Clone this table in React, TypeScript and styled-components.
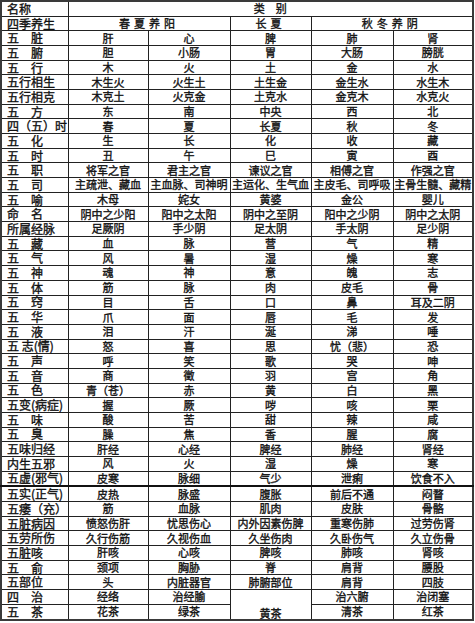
import styled, { createGlobalStyle } from "styled-components";

const GlobalStyle = createGlobalStyle`
  html, body {
    margin: 0;
    padding: 0;
    background: #fff;
  }
  body {
    font-family: "Noto Sans CJK SC", "Liberation Sans", sans-serif;
    color: #111;
  }
`;

const Sheet = styled.div`
  width: 475px;
  height: 623px;
  overflow: hidden;
`;

const Table = styled.table`
  width: 474px;
  height: 621px;
  border-collapse: collapse;
  table-layout: fixed;
  border: 2px solid #3a3a3a;
`;

const Line = styled.tr<{ $heavy?: boolean }>`
  td {
    border-top: ${(p) => (p.$heavy ? "2px solid #111" : "1px solid #222")};
  }
`;

const Cell = styled.td<{ $left?: boolean; $spaced?: boolean; $bottom?: boolean }>`
  border: 1px solid #222;
  padding: ${(p) => (p.$left ? "0 0 0 5px" : "0")};
  font-size: ${(p) => (p.$left ? "12px" : "11px")};
  line-height: 1;
  -webkit-text-stroke: 0.35px #111;
  text-align: ${(p) => (p.$left ? "left" : "center")};
  vertical-align: ${(p) => (p.$bottom ? "bottom" : "middle")};
  letter-spacing: ${(p) => (p.$spaced ? "4px" : "0")};
  white-space: nowrap;
`;

type Row = [string, string, string, string, string, string];

const rows: Row[] = [
  ["五　脏", "肝", "心", "脾", "肺", "肾"],
  ["五　腑", "胆", "小肠", "胃", "大肠", "膀胱"],
  ["五　行", "木", "火", "土", "金", "水"],
  ["五行相生", "木生火", "火生土", "土生金", "金生水", "水生木"],
  ["五行相克", "木克土", "火克金", "土克水", "金克木", "水克火"],
  ["五　方", "东", "南", "中央", "西", "北"],
  ["四（五）时", "春", "夏", "长夏", "秋", "冬"],
  ["五　化", "生", "长", "化", "收", "藏"],
  ["五　时", "丑", "午", "巳", "寅", "酉"],
  ["五　职", "将军之官", "君主之官", "谏议之官", "相傅之官", "作强之官"],
  ["五　司", "主疏泄、藏血", "主血脉、司神明", "主运化、生气血", "主皮毛、司呼吸", "主骨生髓、藏精"],
  ["五　喻", "木母", "姹女", "黄婆", "金公", "婴儿"],
  ["命　名", "阴中之少阳", "阳中之太阳", "阴中之至阴", "阳中之少阴", "阴中之太阴"],
  ["所属经脉", "足厥阴", "手少阴", "足太阴", "手太阴", "足少阴"],
  ["五　藏", "血", "脉", "营", "气", "精"],
  ["五　气", "风", "暑", "湿", "燥", "寒"],
  ["五　神", "魂", "神", "意", "魄", "志"],
  ["五　体", "筋", "脉", "肉", "皮毛", "骨"],
  ["五　窍", "目", "舌", "口", "鼻", "耳及二阴"],
  ["五　华", "爪", "面", "唇", "毛", "发"],
  ["五　液", "泪", "汗", "涎", "涕", "唾"],
  ["五 志(情)", "怒", "喜", "思", "忧（悲）", "恐"],
  ["五　声", "呼", "笑", "歌", "哭", "呻"],
  ["五　音", "商", "徵", "羽", "宫", "角"],
  ["五　色", "青（苍）", "赤", "黄", "白", "黑"],
  ["五变(病症)", "握", "厥", "哕", "咳", "栗"],
  ["五　味", "酸", "苦", "甜", "辣", "咸"],
  ["五　臭", "臊", "焦", "香", "腥", "腐"],
  ["五味归经", "肝经", "心经", "脾经", "肺经", "肾经"],
  ["内生五邪", "风", "火", "湿", "燥", "寒"],
  ["五虚(邪气)", "皮寒", "脉细", "气少", "泄痢", "饮食不入"],
  ["五实(正气)", "皮热", "脉盛", "腹胀", "前后不通", "闷瞀"],
  ["五痿（充）", "筋", "血脉", "肌肉", "皮肤", "骨骼"],
  ["五脏病因", "愤怒伤肝", "忧思伤心", "内外因素伤脾", "重寒伤肺", "过劳伤肾"],
  ["五劳所伤", "久行伤筋", "久视伤血", "久坐伤肉", "久卧伤气", "久立伤骨"],
  ["五脏咳", "肝咳", "心咳", "脾咳", "肺咳", "肾咳"],
  ["五　俞", "颈项", "胸胁", "脊", "肩背", "腰股"],
  ["五部位", "头", "内脏器官", "肺腑部位", "肩背", "四肢"],
];

const widths = [67, 80, 82, 81, 82];

export default function App() {
  return (
    <Sheet>
      <GlobalStyle />
      <Table>
        <colgroup>
          {widths.map((w, i) => (
            <col key={i} style={{ width: w }} />
          ))}
          <col />
        </colgroup>
        <tbody>
          <Line>
            <Cell $left>名称</Cell>
            <Cell colSpan={5}>类　别</Cell>
          </Line>
          <Line>
            <Cell $left>四季养生</Cell>
            <Cell colSpan={2} $spaced>春夏养阳</Cell>
            <Cell $spaced>长夏</Cell>
            <Cell colSpan={2} $spaced>秋冬养阴</Cell>
          </Line>
          {rows.map((r) => (
            <Line key={r[0]} $heavy={r[0] === "五实(正气)"}>
              {r.map((c, i) => (
                <Cell key={i} $left={i === 0}>
                  {c}
                </Cell>
              ))}
            </Line>
          ))}
          <Line>
            <Cell $left>四　治</Cell>
            <Cell>经络</Cell>
            <Cell>治经腧</Cell>
            <Cell rowSpan={2} $bottom>
              黄茶
            </Cell>
            <Cell>治六腑</Cell>
            <Cell>治闭塞</Cell>
          </Line>
          <Line>
            <Cell $left>五　茶</Cell>
            <Cell>花茶</Cell>
            <Cell>绿茶</Cell>
            <Cell>清茶</Cell>
            <Cell>红茶</Cell>
          </Line>
        </tbody>
      </Table>
    </Sheet>
  );
}
